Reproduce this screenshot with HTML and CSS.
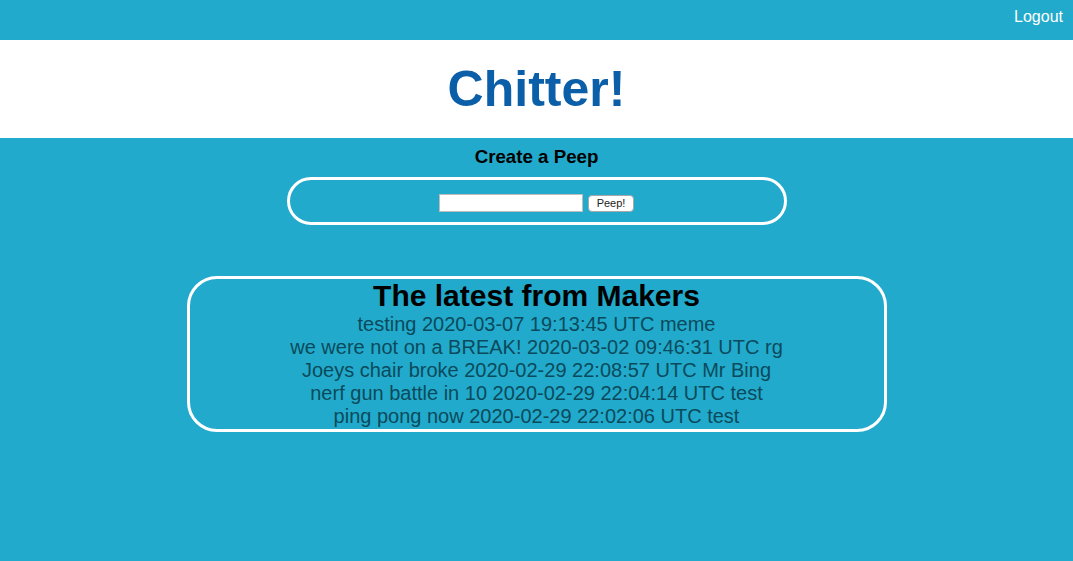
FILE: index.html
```html
<!DOCTYPE html>
<html lang="en">
<head>
<meta charset="utf-8">
<title>Chitter</title>
<link rel="stylesheet" href="styles.css">
</head>
<body>
  <nav class="topbar">
    <a class="logout" href="#">Logout</a>
  </nav>
  <header class="masthead">
    <h1 class="brand">Chitter!</h1>
  </header>
  <main class="main">
    <h3 class="create-title">Create a Peep</h3>
    <form class="peep-form">
      <input class="peep-input" type="text" name="peep">
      <button class="peep-button" type="button">Peep!</button>
    </form>
    <section class="feed">
      <h2 class="feed-title">The latest from Makers</h2>
      <ul class="feed-list">
        <li>testing 2020-03-07 19:13:45 UTC meme</li>
        <li>we were not on a BREAK! 2020-03-02 09:46:31 UTC rg</li>
        <li>Joeys chair broke 2020-02-29 22:08:57 UTC Mr Bing</li>
        <li>nerf gun battle in 10 2020-02-29 22:04:14 UTC test</li>
        <li>ping pong now 2020-02-29 22:02:06 UTC test</li>
      </ul>
    </section>
  </main>
</body>
</html>
```
FILE: styles.css
```css
html, body {
  margin: 0;
  padding: 0;
  height: 100%;
}
body {
  background: #21aacb;
  font-family: "Liberation Sans", Arial, Helvetica, sans-serif;
  color: #000;
}
.topbar {
  height: 40px;
  box-sizing: border-box;
  padding: 8px 10px 0;
  display: flex;
  justify-content: flex-end;
  align-items: flex-start;
}
.logout {
  color: #fff;
  text-decoration: none;
  font-size: 16px;
  line-height: 18px;
}
.masthead {
  background: #fff;
  height: 98px;
  box-sizing: border-box;
  display: flex;
  align-items: center;
  justify-content: center;
}
.brand {
  margin: 0;
  font-size: 50px;
  font-weight: bold;
  color: #0b5ea8;
  line-height: 57px;
}
.main {
  display: flex;
  flex-direction: column;
  align-items: center;
}
.create-title {
  margin: 8px 0 9px;
  font-size: 18.72px;
  line-height: 22px;
  font-weight: bold;
}
.peep-form {
  width: 500px;
  height: 48px;
  box-sizing: border-box;
  border: 3px solid #fff;
  border-radius: 24px;
  display: flex;
  justify-content: center;
  align-items: center;
  gap: 5px;
  padding-top: 4px;
  margin: 0;
}
.peep-input {
  width: 144px;
  height: 18px;
  box-sizing: border-box;
  border: 1px solid #bdbdbd;
  background: #fff;
  padding: 0 2px;
  margin: 0;
}
.peep-button {
  width: 46px;
  height: 17px;
  box-sizing: border-box;
  border: 1px solid #a8a8a8;
  border-radius: 4px;
  background: #fff;
  font-family: "Liberation Sans", Arial, sans-serif;
  font-size: 11px;
  line-height: 13px;
  color: #222;
  padding: 0;
  margin: 0;
}
.feed {
  margin-top: 51px;
  width: 700px;
  box-sizing: border-box;
  border: 3px solid #fff;
  border-radius: 30px;
  text-align: center;
}
.feed-title {
  margin: 0;
  font-size: 30px;
  line-height: 34px;
  font-weight: bold;
}
.feed-list {
  list-style: none;
  margin: 0;
  padding: 0 0 1px;
  font-size: 20px;
  line-height: 23px;
  color: #0b4a5c;
}
```
